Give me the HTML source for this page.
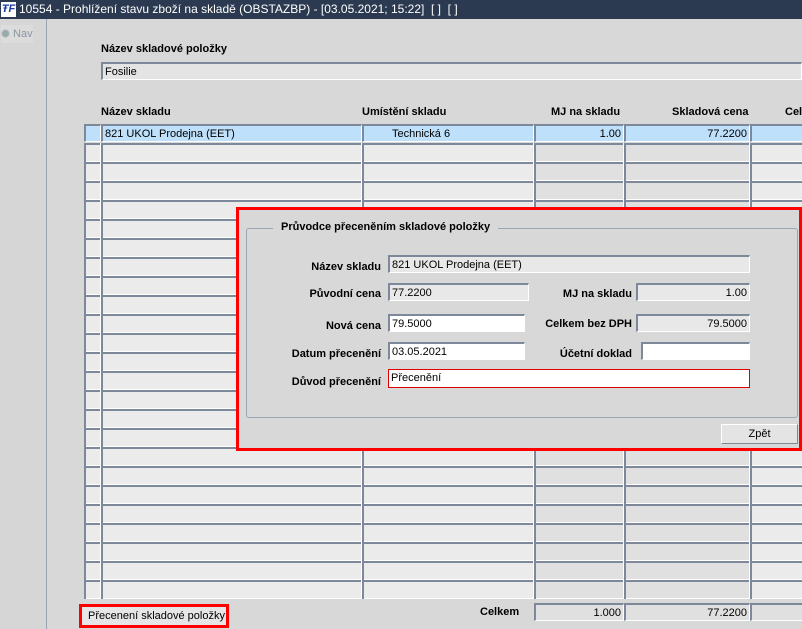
<!DOCTYPE html><html><head><style>
*{margin:0;padding:0;box-sizing:border-box}
body{width:802px;height:629px;overflow:hidden;background:#d6d6d6;font-family:"Liberation Sans",sans-serif;font-size:11px;color:#000;position:relative}
.a{position:absolute}
.t{position:absolute;left:0;top:0;width:802px;height:19px;background:#2b3a50;color:#fff;font-size:12px;line-height:19px}
.b{font-weight:bold}
.c{position:absolute;height:18px;background:#ebebeb;border-top:2px solid #7d889b;border-left:2px solid #7d889b;border-bottom:1px solid #fff;border-right:1px solid #fff;line-height:17px;padding:0 2px;white-space:nowrap;overflow:hidden}
.d{background:#e0e0e0}
.s{background:#bfe0fa}
.r{text-align:right}
.w{background:#fff}
.g{position:absolute;top:143px;height:456px;border-left:2px solid #7d889b}
</style></head><body>
<div class="t"><span class="a" style="left:1px;top:2px;width:15px;height:15px;background:#fff;color:#1a3aa8;font-weight:bold;font-style:italic;font-size:11px;line-height:15px;text-align:center">ŦF</span><span class="a" style="left:19px">10554 - Prohlížení stavu zboží na skladě (OBSTAZBP) - [03.05.2021; 15:22] &nbsp;[ ] &nbsp;[ ]</span></div>
<div class="a" style="left:46px;top:19px;width:756px;height:610px;background:#d8d8d8;border-left:1px solid #9aa3b0"></div>
<div class="a" style="left:1px;top:25px;width:32px;height:18px;background:#dcdcdc;color:#8a94a4;line-height:18px"><span style="display:inline-block;width:9px;height:9px;border-radius:50%;background:#9aa;border:1px solid #ccc;vertical-align:-1px"></span> Nav</div>
<div class="a b" style="left:101px;top:43px">Název skladové položky</div>
<div class="c" style="left:101px;top:62px;width:701px;background:#e4e4e4">Fosilie</div>
<div class="a b" style="left:101px;top:106px">Název skladu</div>
<div class="a b" style="left:362px;top:106px">Umístění skladu</div>
<div class="a b" style="left:551px;top:106px">MJ na skladu</div>
<div class="a b" style="left:672px;top:106px">Skladová cena</div>
<div class="a b" style="left:785px;top:106px">Cel</div>
<div class="c s" style="left:84px;top:124px;width:17px"></div>
<div class="c s" style="left:101px;top:124px;width:261px">821 UKOL Prodejna (EET)</div>
<div class="c s" style="left:362px;top:124px;width:172px;padding-left:28px">Technická 6</div>
<div class="c s r" style="left:534px;top:124px;width:90px">1.00</div>
<div class="c s r" style="left:624px;top:124px;width:126px">77.2200</div>
<div class="c s" style="left:750px;top:124px;width:60px"></div>
<div class="g" style="left:84px;width:17px;background:repeating-linear-gradient(#7d889b 0 2px,#ebebeb 2px 18px,#fff 18px 19px)"></div>
<div class="g" style="left:101px;width:261px;background:repeating-linear-gradient(#7d889b 0 2px,#ebebeb 2px 18px,#fff 18px 19px)"></div>
<div class="g" style="left:362px;width:172px;background:repeating-linear-gradient(#7d889b 0 2px,#ebebeb 2px 18px,#fff 18px 19px)"></div>
<div class="g" style="left:534px;width:90px;background:repeating-linear-gradient(#7d889b 0 2px,#e0e0e0 2px 18px,#fff 18px 19px)"></div>
<div class="g" style="left:624px;width:126px;background:repeating-linear-gradient(#7d889b 0 2px,#e0e0e0 2px 18px,#fff 18px 19px)"></div>
<div class="g" style="left:750px;width:60px;background:repeating-linear-gradient(#7d889b 0 2px,#ebebeb 2px 18px,#fff 18px 19px)"></div>
<div class="a" style="left:100px;top:143px;width:1px;height:456px;background:#fff"></div>
<div class="a" style="left:361px;top:143px;width:1px;height:456px;background:#fff"></div>
<div class="a" style="left:533px;top:143px;width:1px;height:456px;background:#fff"></div>
<div class="a" style="left:623px;top:143px;width:1px;height:456px;background:#fff"></div>
<div class="a" style="left:749px;top:143px;width:1px;height:456px;background:#fff"></div>
<div class="a" style="left:79px;top:604px;width:150px;height:24px;border:3px solid #f00;background:#e6e6e6;line-height:18px;padding-left:6px">Přecenení skladové položky</div>
<div class="a b" style="left:480px;top:606px">Celkem</div>
<div class="c d r" style="left:534px;top:603px;width:90px">1.000</div>
<div class="c d r" style="left:624px;top:603px;width:126px">77.2200</div>
<div class="c d" style="left:750px;top:603px;width:60px"></div>
<div class="a" style="left:236px;top:207px;width:566px;height:244px;border:3px solid #f00;background:#d8d8d8">
<div class="a" style="left:7px;top:18px;width:552px;height:190px;border:1px solid #9aa5b5;border-radius:3px"></div>
<div class="a b" style="left:34px;top:11px;background:#d8d8d8;padding:0 8px">Průvodce přeceněním skladové položky</div>
<div class="a b" style="left:0;width:142px;text-align:right;top:51px">Název skladu</div>
<div class="c" style="left:149px;top:45px;width:362px;background:#e8e8e8">821 UKOL Prodejna (EET)</div>
<div class="a b" style="left:0;width:142px;text-align:right;top:78px">Původní cena</div>
<div class="c" style="left:149px;top:73px;width:141px;background:#e8e8e8">77.2200</div>
<div class="a b" style="left:290px;width:103px;text-align:right;top:78px">MJ na skladu</div>
<div class="c r" style="left:397px;top:73px;width:114px;background:#e8e8e8">1.00</div>
<div class="a b" style="left:0;width:142px;text-align:right;top:110px">Nová cena</div>
<div class="c w" style="left:149px;top:104px;width:137px">79.5000</div>
<div class="a b" style="left:290px;width:103px;text-align:right;top:108px">Celkem bez DPH</div>
<div class="c r" style="left:397px;top:104px;width:114px;background:#e8e8e8">79.5000</div>
<div class="a b" style="left:0;width:142px;text-align:right;top:138px">Datum přecenění</div>
<div class="c w" style="left:149px;top:132px;width:137px">03.05.2021</div>
<div class="a b" style="left:290px;width:103px;text-align:right;top:138px">Účetní doklad</div>
<div class="c w" style="left:402px;top:132px;width:109px"></div>
<div class="a b" style="left:0;width:142px;text-align:right;top:166px">Důvod přecenění</div>
<div class="a" style="left:149px;top:159px;width:362px;height:19px;border:1px solid #e00000;background:#fff;line-height:17px;padding-left:2px">Přecenění</div>
<div class="a" style="left:482px;top:214px;width:77px;height:20px;border:1px solid #7d889b;border-top-color:#fff;border-left-color:#fff;background:#e4e4e4;text-align:center;line-height:18px">Zpět</div>
</div>
</body></html>
